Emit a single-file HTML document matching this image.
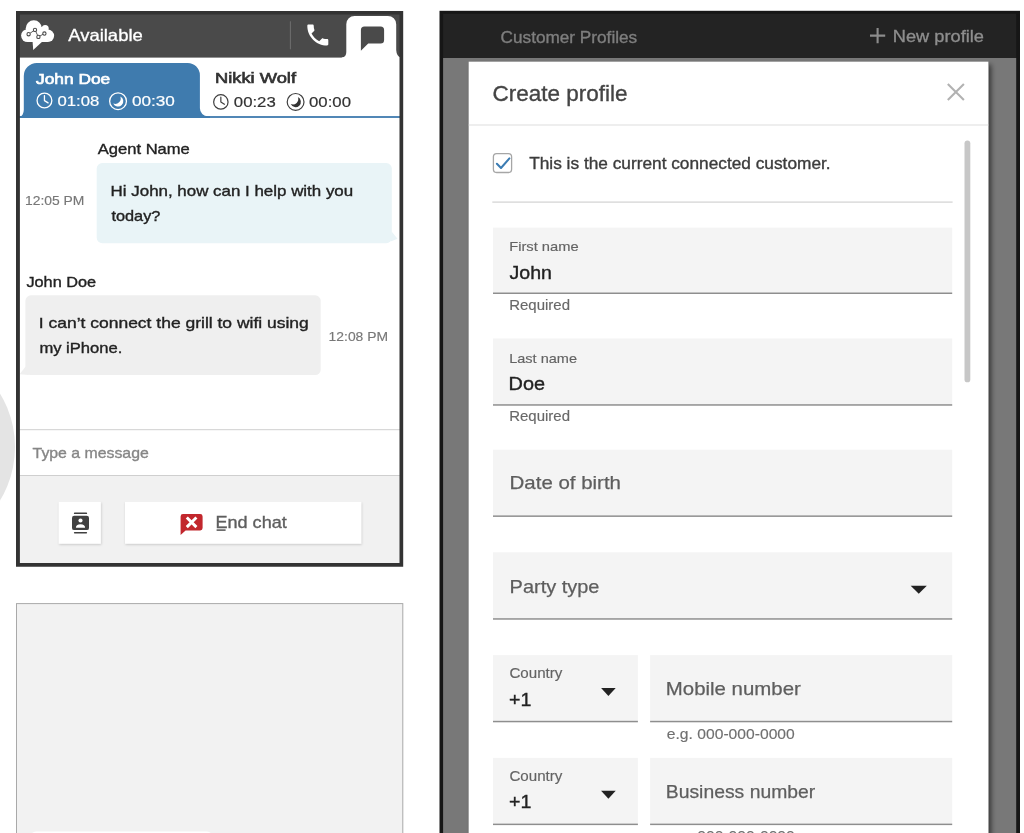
<!DOCTYPE html>
<html lang="en">
<head>
<meta charset="utf-8">
<title>Contact Control Panel - Create profile</title>
<style>
  html, body { margin: 0; padding: 0; background: #ffffff; }
  body { width: 1024px; height: 833px; overflow: hidden; font-family: "Liberation Sans", sans-serif; }
  svg { display: block; position: absolute; left: 0; top: 0; }
  text { font-family: "Liberation Sans", sans-serif; }
</style>
</head>
<body>
<svg width="1024" height="833" viewBox="0 0 1024 833">
  <defs>
    <filter id="btnShadow" x="-10%" y="-10%" width="120%" height="130%">
      <feDropShadow dx="0.5" dy="1" stdDeviation="0.8" flood-color="#000" flood-opacity="0.18"/>
    </filter>
    <filter id="modalShadow" x="-5%" y="-5%" width="110%" height="110%">
      <feDropShadow dx="3" dy="3" stdDeviation="2.6" flood-color="#000" flood-opacity="0.52"/>
    </filter>
  </defs>

  <!-- ================= LEFT: decorative circle ================= -->
  <circle cx="-88.3" cy="447" r="103.3" fill="#e4e4e4"/>

  <!-- ================= LEFT: CCP frame ================= -->
  <g id="ccp">
    <rect x="17" y="50" width="385" height="515" fill="#ffffff"/>
    <!-- header -->
    <rect x="17" y="12" width="385" height="45.6" fill="#4a4a4a"/>
    <line x1="290.4" y1="21.3" x2="290.4" y2="49.3" stroke="#6e6e6e" stroke-width="1"/>
    <!-- active (chat) tab -->
    <path d="M341.8 57.6 Q346.3 57.2 346.3 52 L346.3 24.2 A8.3 8.3 0 0 1 354.6 15.9 L387.9 15.9 A8.3 8.3 0 0 1 396.2 24.2 L396.2 50 Q396.6 56 400.5 57.6 L400.5 59 L341.8 59 Z" fill="#ffffff"/>
    <!-- chat glyph -->
    <path d="M364.4 26.4 H380.6 A3.5 3.5 0 0 1 384.1 29.9 V40 A3.5 3.5 0 0 1 380.6 43.5 H368.2 L360.9 50.7 V29.9 A3.5 3.5 0 0 1 364.4 26.4 Z" fill="#4a4a4a"/>
    <!-- phone glyph -->
    <g transform="translate(303.8 21) scale(1.167)" fill="#ffffff">
      <path d="M6.62 10.79c1.44 2.83 3.76 5.14 6.59 6.59l2.2-2.2c.27-.27.67-.36 1.02-.24 1.12.37 2.33.57 3.57.57.55 0 1 .45 1 1V20c0 .55-.45 1-1 1-9.39 0-17-7.61-17-17 0-.55.45-1 1-1h3.5c.55 0 1 .45 1 1 0 1.25.2 2.45.57 3.57.11.35.03.74-.25 1.02l-2.2 2.2z"/>
    </g>
    <!-- cloud logo -->
    <g id="logo">
      <g fill="#ffffff">
        <circle cx="27.5" cy="35.6" r="6.4"/>
        <circle cx="33.8" cy="28.4" r="8.1"/>
        <circle cx="45.2" cy="28.4" r="3.5"/>
        <circle cx="47.9" cy="35.8" r="6.2"/>
        <rect x="27.5" y="30" width="20.4" height="12"/>
        <rect x="38" y="27" width="8.5" height="6"/>
        <path d="M32.6 41.5 L33.2 50.1 L42.4 41.5 Z"/>
      </g>
      <g fill="none" stroke="#4a4a4a" stroke-width="0.9">
        <path d="M30.1 33.2 L33.5 30.9 M35.8 31.5 L37.6 35.3 M40 36 L42.9 34.3"/>
        <circle cx="28.6" cy="34.2" r="1.65" stroke-width="1.05"/>
        <circle cx="35" cy="29.9" r="1.65" stroke-width="1.05"/>
        <circle cx="38.4" cy="36.9" r="1.65" stroke-width="1.05"/>
        <circle cx="44.4" cy="33.5" r="1.65" stroke-width="1.05"/>
      </g>
    </g>

    <!-- contact tabs -->
    <rect x="17" y="116.1" width="385" height="1.8" fill="#3f7bae"/>
    <path d="M17 118 V116.3 H19.9 A3.9 6.5 0 0 0 23.8 109.8 V75.9 A13 13 0 0 1 36.8 62.9 H187.7 A12.2 12.2 0 0 1 199.9 75.1 V108.3 A8 8 0 0 0 207.9 116.3 H210 V118 Z" fill="#3f7bae"/>

    <!-- agent bubble -->
    <path d="M391.6 231.6 L397.5 238.8 L390.6 241.6 Z" fill="#e9f4f7"/>
    <rect x="96.7" y="163.1" width="295.1" height="80.1" rx="5.5" fill="#e9f4f7"/>
    <!-- customer bubble -->
    <path d="M25.6 366.4 L19.6 374.2 L29 374.9 Z" fill="#efefef"/>
    <rect x="25.4" y="295.3" width="295.3" height="79.7" rx="5.5" fill="#efefef"/>

    <!-- input + footer -->
    <rect x="17" y="429.2" width="385" height="1" fill="#cfcfcf"/>
    <rect x="17" y="475.5" width="385" height="90" fill="#f1f1f1"/>
    <rect x="17" y="475" width="385" height="1" fill="#cfcfcf"/>
    <rect x="58.8" y="501.9" width="42" height="41.8" fill="#ffffff" filter="url(#btnShadow)"/>
    <rect x="125" y="501.9" width="236.2" height="41.8" fill="#ffffff" filter="url(#btnShadow)"/>

    <!-- tab 1 timers (white) -->
    <g fill="none" stroke="#ffffff" stroke-width="1.3" stroke-linecap="round" stroke-linejoin="round">
      <circle cx="44.45" cy="100.45" r="7.4"/>
      <path d="M44.45 95.6 V100.6 L48.1 102.9"/>
      <circle cx="118.05" cy="101.2" r="8.4"/>
    </g>
    <path d="M120.3 96.4 A5.3 5.3 0 1 1 113.2 103.4 A5.4 5.4 0 0 0 120.3 96.4 Z" fill="#ffffff"/>
    <!-- tab 2 timers (dark) -->
    <g fill="none" stroke="#3e3e3e" stroke-width="1.2" stroke-linecap="round" stroke-linejoin="round">
      <circle cx="220.85" cy="101.9" r="7.2"/>
      <path d="M220.85 97.2 V102.1 L224.4 104.3"/>
      <circle cx="295.6" cy="101.9" r="8.4"/>
    </g>
    <path d="M297.85 97.1 A5.3 5.3 0 1 1 290.75 104.1 A5.4 5.4 0 0 0 297.85 97.1 Z" fill="#333333"/>

    <!-- contacts icon -->
    <g fill="#404040">
      <rect x="73.9" y="512.6" width="13.2" height="1.5" rx="0.7"/>
      <rect x="72" y="515.7" width="17" height="14.4" rx="2.2"/>
      <rect x="73.9" y="532" width="13.2" height="1.5" rx="0.7"/>
    </g>
    <circle cx="80.5" cy="520.5" r="2.05" fill="#ffffff"/>
    <path d="M75.9 527.8 Q75.9 524.3 80.5 524.3 Q85.1 524.3 85.1 527.8 Z" fill="#ffffff"/>

    <!-- end chat icon -->
    <path d="M183 514 H200.2 Q202.6 514 202.6 516.4 V528 Q202.6 530.4 200.2 530.4 H185.6 L180.6 535 V516.4 Q180.6 514 183 514 Z" fill="#c2272d"/>
    <path d="M186.8 517.5 L196.4 527.1 M196.4 517.5 L186.8 527.1" stroke="#ffffff" stroke-width="2.9" fill="none"/>

    <!-- frame border (on top) -->
    <path fill-rule="evenodd" fill="#333333" d="M16 11 H403.2 V566.8 H16 Z M19.9 14.6 V563.1 H399.5 V14.6 Z"/>
  </g>

  <!-- ================= LEFT: text ================= -->
  <g id="ccp-text" opacity="0.999">
    <text x="68.2" y="41.4" font-size="16.5" fill="#ffffff" stroke="#ffffff" stroke-width="0.3" textLength="74.6" lengthAdjust="spacingAndGlyphs">Available</text>

    <text x="36" y="84.4" font-size="15" fill="#ffffff" stroke="#ffffff" stroke-width="0.65" textLength="74.2" lengthAdjust="spacingAndGlyphs">John Doe</text>
    <text x="57.5" y="106.3" font-size="14" fill="#ffffff" stroke="#ffffff" stroke-width="0.18" textLength="41.8" lengthAdjust="spacingAndGlyphs">01:08</text>
    <text x="131.9" y="106.3" font-size="14" fill="#ffffff" stroke="#ffffff" stroke-width="0.18" textLength="43" lengthAdjust="spacingAndGlyphs">00:30</text>

    <text x="215" y="83.4" font-size="15" fill="#333333" stroke="#333333" stroke-width="0.65" textLength="81" lengthAdjust="spacingAndGlyphs">Nikki Wolf</text>
    <text x="233.8" y="107.3" font-size="14" fill="#333333" stroke="#333333" stroke-width="0.18" textLength="42" lengthAdjust="spacingAndGlyphs">00:23</text>
    <text x="309" y="107.3" font-size="14" fill="#333333" stroke="#333333" stroke-width="0.18" textLength="42" lengthAdjust="spacingAndGlyphs">00:00</text>

    <text x="97.8" y="153.9" font-size="14.5" fill="#222222" stroke="#222222" stroke-width="0.35" textLength="92" lengthAdjust="spacingAndGlyphs">Agent Name</text>
    <text x="25" y="204.5" font-size="13" fill="#777777" stroke="#777777" stroke-width="0.15" textLength="59.4" lengthAdjust="spacingAndGlyphs">12:05 PM</text>
    <text x="110.6" y="195.9" font-size="14.5" fill="#222222" stroke="#222222" stroke-width="0.35" textLength="242.6" lengthAdjust="spacingAndGlyphs">Hi John, how can I help with you</text>
    <text x="111.4" y="220.7" font-size="14.5" fill="#222222" stroke="#222222" stroke-width="0.35" textLength="49" lengthAdjust="spacingAndGlyphs">today?</text>

    <text x="26.4" y="286.5" font-size="14.5" fill="#222222" stroke="#222222" stroke-width="0.35" textLength="69.8" lengthAdjust="spacingAndGlyphs">John Doe</text>
    <text x="38.8" y="327.9" font-size="14.5" fill="#222222" stroke="#222222" stroke-width="0.35" textLength="270" lengthAdjust="spacingAndGlyphs">I can’t connect the grill to wifi using</text>
    <text x="39.4" y="352.9" font-size="14.5" fill="#222222" stroke="#222222" stroke-width="0.35" textLength="83" lengthAdjust="spacingAndGlyphs">my iPhone.</text>
    <text x="328.6" y="340.6" font-size="13" fill="#777777" stroke="#777777" stroke-width="0.15" textLength="59.4" lengthAdjust="spacingAndGlyphs">12:08 PM</text>

    <text x="32.6" y="458.2" font-size="15" fill="#868686" stroke="#868686" stroke-width="0.35" textLength="116.2" lengthAdjust="spacingAndGlyphs">Type a message</text>
    <text x="215.4" y="528.4" font-size="17.2" fill="#5e5e5e" stroke="#5e5e5e" stroke-width="0.35" textLength="71.4" lengthAdjust="spacingAndGlyphs">End chat</text>
    <rect x="216.6" y="529.3" width="9" height="1.6" fill="#5e5e5e"/>
  </g>

  <!-- ================= LEFT: lower empty panel ================= -->
  <rect x="16.5" y="603.6" width="386.3" height="240" fill="#f2f2f2" stroke="#a9a9a9" stroke-width="1"/>
  <rect x="30" y="831.5" width="183" height="20" rx="6" fill="#ffffff"/>

  <!-- ================= RIGHT: profiles frame ================= -->
  <g id="profiles">
    <rect x="439.5" y="10.8" width="580.5" height="830" fill="#161616"/>
    <rect x="443.1" y="13.8" width="573.1" height="44.2" fill="#232323"/>
    <rect x="443.1" y="58" width="573.1" height="780" fill="#787878"/>
    <rect x="468.7" y="61.7" width="519.6" height="780" fill="#ffffff" filter="url(#modalShadow)"/>
    <rect x="468.7" y="124.5" width="519.6" height="1" fill="#dedede"/>
    <rect x="964.5" y="140.4" width="5.8" height="241.9" rx="2.9" fill="#c7c7c7"/>
    <rect x="492.3" y="201.5" width="460.3" height="1.2" fill="#d2d2d2"/>

    <!-- header icons -->
    <path d="M870 35.6 H885.2 M877.6 28 V43.2" stroke="#8c8c8c" stroke-width="2.1" fill="none"/>
    <path d="M947.8 84.1 L963.9 99.9 M963.9 84.1 L947.8 99.9" stroke="#b2b2b2" stroke-width="2.1" fill="none"/>

    <!-- checkbox -->
    <rect x="493.4" y="153.6" width="18.2" height="18.9" rx="3.2" fill="#ffffff" stroke="#a6a6a6" stroke-width="1.3"/>
    <path d="M496.9 163.8 L501 168 L509.4 158.4" fill="none" stroke="#3b7cb3" stroke-width="2" stroke-linecap="round" stroke-linejoin="round"/>

    <!-- form fields -->
    <g fill="#f4f4f4">
      <rect x="493" y="227.6" width="459.2" height="65.1"/>
      <rect x="493" y="338.5" width="459.2" height="65.8"/>
      <rect x="493" y="449.7" width="459.2" height="65.8"/>
      <rect x="493" y="552.3" width="459.2" height="66"/>
      <rect x="493" y="655.1" width="144.9" height="65.8"/>
      <rect x="650.1" y="655.1" width="302.1" height="65.8"/>
      <rect x="493" y="757.9" width="144.9" height="65.8"/>
      <rect x="650.1" y="757.9" width="302.1" height="65.8"/>
    </g>
    <g fill="#8e8e8e">
      <rect x="493" y="292.5" width="459.2" height="1.5"/>
      <rect x="493" y="404.2" width="459.2" height="1.5"/>
      <rect x="493" y="515.4" width="459.2" height="1.5"/>
      <rect x="493" y="618.2" width="459.2" height="1.5"/>
      <rect x="493" y="720.8" width="144.9" height="1.5"/>
      <rect x="650.1" y="720.8" width="302.1" height="1.5"/>
      <rect x="493" y="823.6" width="144.9" height="1.5"/>
      <rect x="650.1" y="823.6" width="302.1" height="1.5"/>
    </g>
    <!-- text -->
    <g id="profiles-text" opacity="0.999">
      <text x="500.6" y="43" font-size="16.5" fill="#7e7e7e" stroke="#7e7e7e" stroke-width="0.35" textLength="136.6" lengthAdjust="spacingAndGlyphs">Customer Profiles</text>
      <text x="892.8" y="41.8" font-size="17.4" fill="#8e8e8e" stroke="#8e8e8e" stroke-width="0.35" textLength="91.2" lengthAdjust="spacingAndGlyphs">New profile</text>
      <text x="492.6" y="100.5" font-size="22" fill="#444444" stroke="#444444" stroke-width="0.35" textLength="135" lengthAdjust="spacingAndGlyphs">Create profile</text>
      <text x="529.2" y="168.9" font-size="16.5" fill="#3c3c3c" stroke="#3c3c3c" stroke-width="0.35" textLength="301.4" lengthAdjust="spacingAndGlyphs">This is the current connected customer.</text>

      <text x="509.2" y="251.1" font-size="13.4" fill="#636363" stroke="#636363" stroke-width="0.15" textLength="69.4" lengthAdjust="spacingAndGlyphs">First name</text>
      <text x="509.6" y="278.8" font-size="17.6" fill="#222222" stroke="#222222" stroke-width="0.35" textLength="42.4" lengthAdjust="spacingAndGlyphs">John</text>
      <text x="509.2" y="310.3" font-size="14" fill="#686868" stroke="#686868" stroke-width="0.15" textLength="60.8" lengthAdjust="spacingAndGlyphs">Required</text>

      <text x="509.2" y="362.5" font-size="13.4" fill="#636363" stroke="#636363" stroke-width="0.15" textLength="67.8" lengthAdjust="spacingAndGlyphs">Last name</text>
      <text x="508.6" y="390.2" font-size="17.6" fill="#222222" stroke="#222222" stroke-width="0.35" textLength="36.4" lengthAdjust="spacingAndGlyphs">Doe</text>
      <text x="509.2" y="421.1" font-size="14" fill="#686868" stroke="#686868" stroke-width="0.15" textLength="60.8" lengthAdjust="spacingAndGlyphs">Required</text>

      <text x="509.6" y="489.3" font-size="18.4" fill="#5e5e5e" stroke="#5e5e5e" stroke-width="0.25" textLength="111.4" lengthAdjust="spacingAndGlyphs">Date of birth</text>
      <text x="509.6" y="592.6" font-size="18.4" fill="#5e5e5e" stroke="#5e5e5e" stroke-width="0.25" textLength="89.8" lengthAdjust="spacingAndGlyphs">Party type</text>

      <text x="509.4" y="678" font-size="14" fill="#636363" stroke="#636363" stroke-width="0.15" textLength="53" lengthAdjust="spacingAndGlyphs">Country</text>
      <text x="509" y="705.5" font-size="18.4" fill="#222222" stroke="#222222" stroke-width="0.35" textLength="22.4" lengthAdjust="spacingAndGlyphs">+1</text>
      <text x="665.8" y="694.9" font-size="18.4" fill="#5e5e5e" stroke="#5e5e5e" stroke-width="0.25" textLength="135" lengthAdjust="spacingAndGlyphs">Mobile number</text>
      <text x="666.8" y="738.7" font-size="14.1" fill="#707070" stroke="#707070" stroke-width="0.15" textLength="128" lengthAdjust="spacingAndGlyphs">e.g. 000-000-0000</text>

      <text x="509.4" y="780.8" font-size="14" fill="#636363" stroke="#636363" stroke-width="0.15" textLength="53" lengthAdjust="spacingAndGlyphs">Country</text>
      <text x="509" y="808.3" font-size="18.4" fill="#222222" stroke="#222222" stroke-width="0.35" textLength="22.4" lengthAdjust="spacingAndGlyphs">+1</text>
      <text x="665.8" y="798" font-size="18.4" fill="#5e5e5e" stroke="#5e5e5e" stroke-width="0.25" textLength="149.4" lengthAdjust="spacingAndGlyphs">Business number</text>
      <text x="666.8" y="841.1" font-size="14.1" fill="#707070" stroke="#707070" stroke-width="0.15" textLength="128" lengthAdjust="spacingAndGlyphs">e.g. 000-000-0000</text>
    </g>

    <!-- dropdown carets -->
    <g fill="#222222">
      <path d="M910.7 585.7 H926.8 L918.75 593.7 Z"/>
      <path d="M601.1 688 H615.7 L608.4 695.9 Z"/>
      <path d="M601.1 790.8 H615.7 L608.4 798.7 Z"/>
    </g>
  </g>
</svg>
</body>
</html>
